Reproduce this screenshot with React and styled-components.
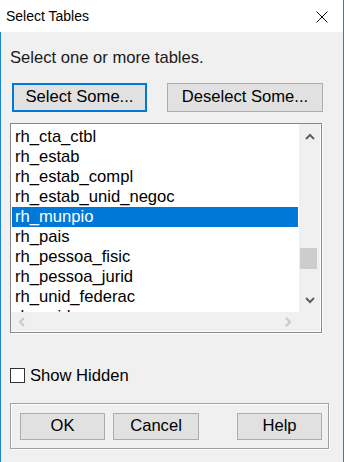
import React from 'react';
import styled, {createGlobalStyle} from 'styled-components';

const GlobalStyle = createGlobalStyle`
    html, body{
        margin: 0;
        padding: 0;
        background: #f0f0f0;
    }
    body{
        font-family: "Liberation Sans", Arial, sans-serif;
    }
`

const tables = [
    'rh_cta_ctbl',
    'rh_estab',
    'rh_estab_compl',
    'rh_estab_unid_negoc',
    'rh_munpio',
    'rh_pais',
    'rh_pessoa_fisic',
    'rh_pessoa_jurid',
    'rh_unid_federac',
    'rh_unid_orcam',
];

//===
// Styles
//===

const Window = styled.div`
    width: 344px;
    height: 462px;
    display: flex;
    flex-direction: column;
    background: #f0f0f0;
    box-sizing: border-box;
    overflow: hidden;
    font-size: 16.6px;
    color: #000;
`

const TitleBar = styled.div`
    height: 32px;
    flex-shrink: 0;
    background: #fff;
    border-right: 1px solid #1883d7;
    display: flex;
    align-items: center;
    justify-content: space-between;
    padding: 0 15px 0 6px;
    font-size: 14px;
    color: #000;
    .close{
        display: block;
        margin-top: 2px;
    }
`

const Body = styled.div`
    flex: 1;
    border-left: 1px solid #1883d7;
    border-right: 1px solid #1883d7;
    padding: 0 9px;
    display: flex;
    flex-direction: column;
`

const Prompt = styled.div`
    margin-top: 16px;
    line-height: 19px;
    color: #1a1a1a;
`

const ButtonRow = styled.div`
    display: flex;
    gap: 20px;
    margin: 16px 0 0 2px;
`

const Button = styled.div`
    box-sizing: border-box;
    width: ${p => p.width}px;
    height: ${p => p.height || 29}px;
    margin-left: ${p => p.offset || 0}px;
    background: #e1e1e1;
    border: ${p => p.primary ? '2px solid #0078d7' : '1px solid #adadad'};
    display: flex;
    align-items: center;
    justify-content: center;
    line-height: 1;
    color: #000;
`

const ListBox = styled.div`
    box-sizing: border-box;
    margin-top: 11px;
    width: 312px;
    height: 210px;
    border: 1px solid #828790;
    box-shadow: 1px 1px 0 #fff;
    display: grid;
    grid-template-columns: 288px 21px;
    grid-template-rows: 188px 19px;
    background: #fff;
`

const Items = styled.div`
    grid-column: 1;
    grid-row: 1;
    overflow: hidden;
    background: #fff;
    padding-top: 3px;
`

const Item = styled.div`
    height: 20px;
    line-height: 20px;
    margin: 0 1px;
    padding-left: 3px;
    white-space: nowrap;
    background: ${p => p.selected ? '#0078d7' : 'transparent'};
    color: ${p => p.selected ? '#fff' : '#000'};
`

const VScroll = styled.div`
    grid-column: 2;
    grid-row: 1 / span 2;
    background: #f0f0f0;
    display: flex;
    flex-direction: column;
`

const Arrow = styled.div`
    height: ${p => p.size}px;
    width: ${p => p.width || 'auto'};
    flex-shrink: 0;
    display: flex;
    align-items: center;
    justify-content: center;
`

const Track = styled.div`
    flex: 1;
`

const Thumb = styled.div`
    margin: 98px 0 0 1px;
    width: 17px;
    height: 21px;
    background: #cdcdcd;
`

const HScroll = styled.div`
    grid-column: 1;
    grid-row: 2;
    background: #f0f0f0;
    display: flex;
    justify-content: space-between;
    align-items: center;
`

const CheckRow = styled.div`
    margin-top: 35px;
    display: flex;
    align-items: center;
    gap: 5px;
    height: 15px;
`

const CheckBox = styled.div`
    box-sizing: border-box;
    width: 15px;
    height: 15px;
    border: 1px solid #333;
    background: #fff;
`

const GroupBox = styled.div`
    box-sizing: border-box;
    margin-top: 20px;
    width: 319px;
    height: 46px;
    border: 1px solid #a0a0a0;
    box-shadow: inset 1px 1px 0 #fff, 1px 1px 0 #fff;
    display: flex;
    align-items: center;
    padding-left: 9px;
    padding-top: 1px;
    gap: 8px;
`

//===
// Component
//===

const Chevron = ({dir, color}) => {
    const paths = {
        up: 'M1 6 L5 2 L9 6',
        down: 'M1 2 L5 6 L9 2',
        left: 'M6 1 L2 5 L6 9',
        right: 'M2 1 L6 5 L2 9',
    };
    const vertical = dir === 'up' || dir === 'down';
    return(
        <svg width={vertical ? 10 : 8} height={vertical ? 8 : 10} viewBox={vertical ? '0 0 10 8' : '0 0 8 10'}>
            <path d={paths[dir]} fill="none" stroke={color} strokeWidth="2" />
        </svg>
    )
}

const App = () => {
    return(
        <>
        <GlobalStyle />
        <Window>
            <TitleBar>
                <span>Select Tables</span>
                <svg className="close" width="12" height="12" viewBox="0 0 12 12">
                    <path d="M0.5 0.5 L11.5 11.5 M11.5 0.5 L0.5 11.5" stroke="#111" strokeWidth="1" />
                </svg>
            </TitleBar>
            <Body>
                <Prompt>Select one or more tables.</Prompt>
                <ButtonRow>
                    <Button primary width={135}>Select Some...</Button>
                    <Button width={156}>Deselect Some...</Button>
                </ButtonRow>
                <ListBox>
                    <Items>
                        {tables.map(t => (
                            <Item key={t} selected={t === 'rh_munpio'}>{t}</Item>
                        ))}
                    </Items>
                    <VScroll>
                        <Arrow size={26}><Chevron dir="up" color="#606060" /></Arrow>
                        <Track><Thumb /></Track>
                        <Arrow size={62}><Chevron dir="down" color="#606060" /></Arrow>
                    </VScroll>
                    <HScroll>
                        <Arrow size={19} width="22px"><Chevron dir="left" color="#c8c8c8" /></Arrow>
                        <Arrow size={19} width="23px"><Chevron dir="right" color="#c8c8c8" /></Arrow>
                    </HScroll>
                </ListBox>
                <CheckRow>
                    <CheckBox />
                    <span>Show Hidden</span>
                </CheckRow>
                <GroupBox>
                    <Button width={85} height={27}>OK</Button>
                    <Button width={86} height={27}>Cancel</Button>
                    <Button width={85} height={27} offset={30}>Help</Button>
                </GroupBox>
            </Body>
        </Window>
        </>
    )
};

export default App;
